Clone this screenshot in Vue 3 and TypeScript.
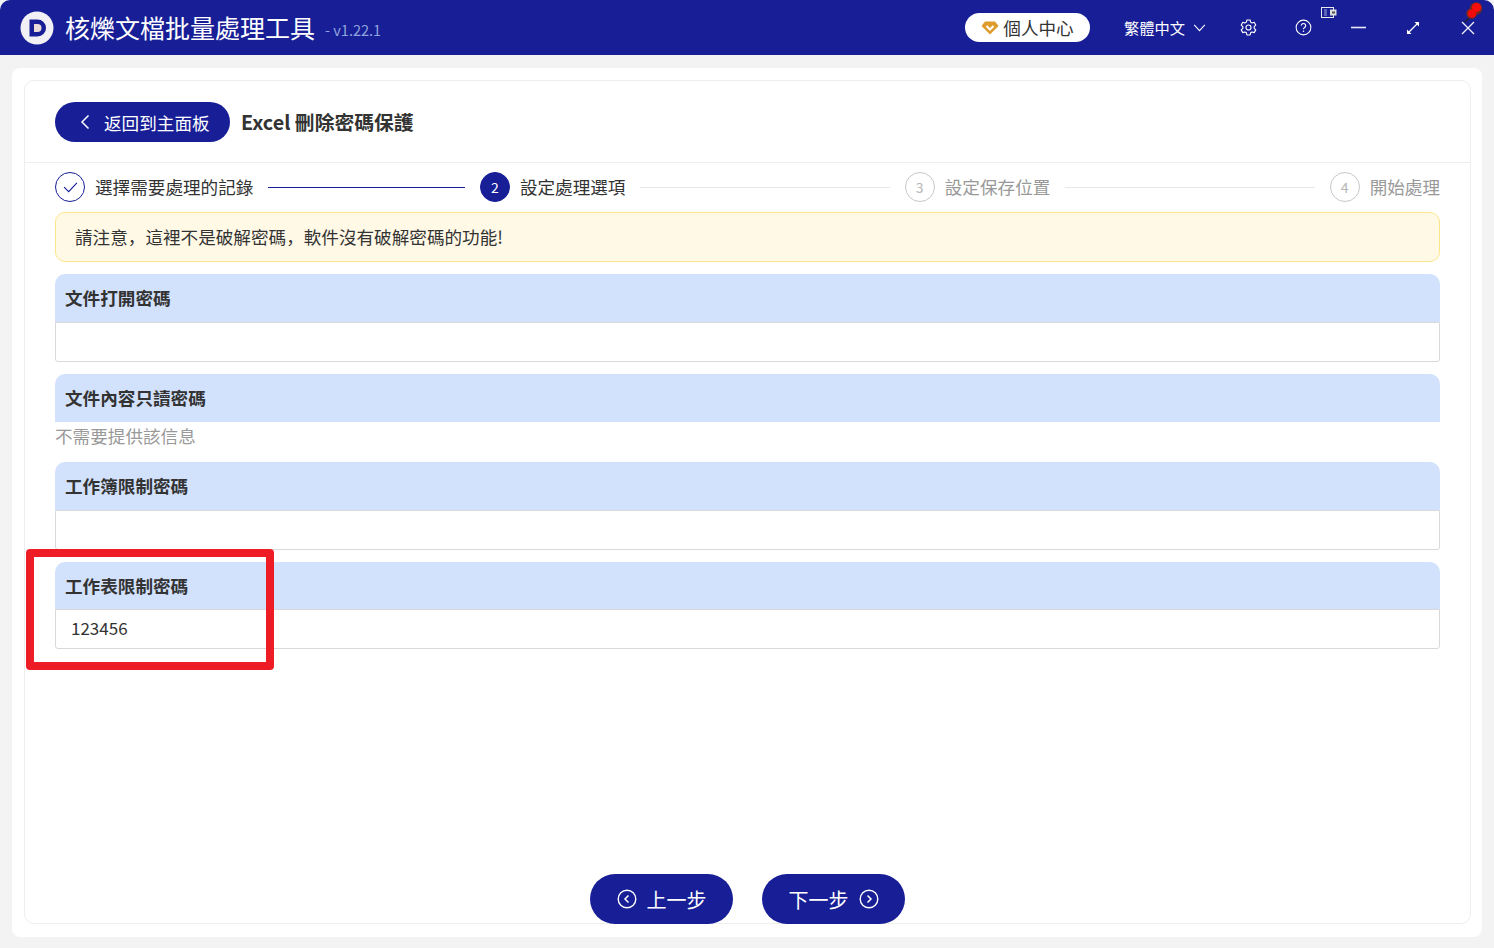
<script setup lang="ts">
interface Step {
  no: number
  label: string
  state: 'done' | 'active' | 'todo'
}

const steps: Step[] = [
  { no: 1, label: '選擇需要處理的記錄', state: 'done' },
  { no: 2, label: '設定處理選項', state: 'active' },
  { no: 3, label: '設定保存位置', state: 'todo' },
  { no: 4, label: '開始處理', state: 'todo' },
]
</script>

<template>
  <div class="app">
    <header class="topbar">
      <svg class="logo" viewBox="0 0 34 34" width="34" height="34">
        <circle cx="17" cy="17" r="16.5" fill="#f1f0f4" />
        <path d="M9.5 8.5h8a8.5 8.5 0 0 1 0 17h-8z" fill="#171e96" />
        <path d="M14 13h3.5a4 4 0 0 1 0 8H14z" fill="#e9dcd8" />
      </svg>
      <span class="app-name">核爍文檔批量處理工具</span>
      <span class="version">- v1.22.1</span>
      <div class="spacer"></div>
      <button class="user-btn">
        <svg viewBox="0 0 18 14" width="18" height="14">
          <path d="M4 .5h10l3.500 4.500L9 13.500.5 5z" fill="#dd9c2c" />
          <path d="M5.500 5l3.500 3.500L12.500 5" fill="none" stroke="#fff" stroke-width="2" />
        </svg>
        個人中心
      </button>
      <span class="lang">繁體中文</span>
      <svg class="lang-arrow" viewBox="0 0 14 9" width="13" height="8">
        <path d="M1 1l6 6.500L13 1" fill="none" stroke="#fff" stroke-width="1.200" />
      </svg>
      <svg class="gear" viewBox="0 0 18 18" width="17" height="17">
        <path
          d="M7.300 1h3.400l.5 2.300 1.500.9 2.300-.7 1.700 2.900-1.700 1.600v1.900l1.700 1.600-1.700 2.900-2.300-.7-1.500.9-.5 2.300H7.300l-.5-2.300-1.500-.9-2.300.7-1.700-2.900L3 10V8L1.300 6.400 3 3.500l2.300.7 1.500-.9z"
          fill="none"
          stroke="#fff"
          stroke-width="1.200"
          stroke-linejoin="round"
        />
        <circle cx="9" cy="9" r="2.700" fill="none" stroke="#fff" stroke-width="1.200" />
      </svg>
      <svg class="help" viewBox="0 0 18 18" width="17" height="17">
        <circle cx="9" cy="9" r="7.800" fill="none" stroke="#fff" stroke-width="1.100" />
        <path d="M6.700 7a2.300 2.300 0 1 1 3.500 2c-.8.500-1.200.9-1.200 1.800" fill="none" stroke="#fff" stroke-width="1.200" />
        <circle cx="9" cy="13" r=".8" fill="#fff" />
      </svg>
      <svg class="win-btn min" viewBox="0 0 15 3" width="15" height="3">
        <path d="M0 1.500h15" stroke="#e8e8f6" stroke-width="1.600" />
      </svg>
      <svg class="win-btn max" viewBox="0 0 14 14" width="14" height="14">
        <path d="M2 12l10-10" stroke="#fff" stroke-width="1.200" />
        <path d="M8.500 1H13v4.500zM1 8.500V13h4.500z" fill="#fff" />
      </svg>
      <svg class="win-btn close" viewBox="0 0 14 14" width="14" height="14">
        <path d="M1 1l12 12M13 1L1 13" stroke="#f2f2fb" stroke-width="1.300" />
      </svg>
      <svg class="mini-icon" viewBox="0 0 16 12" width="16" height="12">
        <rect x=".5" y=".5" width="12" height="10" fill="#171e96" stroke="#e8e8e8" />
        <rect x="3" y="2" width="3" height="7" fill="#5a62b8" />
        <rect x="9" y="2.500" width="6.500" height="6" fill="#ddd" />
        <rect x="11" y="4.500" width="3" height="2" fill="#555" />
      </svg>
      <svg class="pin" viewBox="0 0 20 21" width="20" height="21">
        <path d="M1 20l6-6" stroke="#222" stroke-width="1.500" />
        <circle cx="12" cy="6.500" r="6.300" fill="#6e2a22" />
        <circle cx="7.500" cy="11.500" r="5.300" fill="#6e2a22" />
        <circle cx="12.500" cy="5.500" r="4.600" fill="#f60d0d" />
        <circle cx="8" cy="11.500" r="4.300" fill="#f00c0c" />
      </svg>
    </header>

    <main class="outer">
      <section class="card">
        <div class="card-head">
          <button class="back-btn">
            <svg viewBox="0 0 10 16" width="10" height="16">
              <path d="M8.500 1.500L2 8l6.500 6.500" fill="none" stroke="#fff" stroke-width="1.500" />
            </svg>
            <span>返回到主面板</span>
          </button>
          <h1 class="page-title">Excel 刪除密碼保護</h1>
        </div>

        <div class="card-body">
          <div class="steps">
            <div v-for="(step, i) in steps" :key="step.no" class="step" :class="step.state">
              <span class="step-dot">
                <svg v-if="step.state === 'done'" viewBox="0 0 16 12" width="15" height="11">
                  <path d="M1 5.500L6 10.500 15 1" fill="none" stroke="#171e96" stroke-width="1.200" />
                </svg>
                <template v-else>{{ step.no }}</template>
              </span>
              <span class="step-label">{{ step.label }}</span>
              <div v-if="i < steps.length - 1" class="step-line"></div>
            </div>
          </div>

          <div class="notice">請注意，這裡不是破解密碼，軟件沒有破解密碼的功能!</div>

          <div class="field">
            <div class="field-title">文件打開密碼</div>
            <div class="field-input"></div>
          </div>

          <div class="field">
            <div class="field-title">文件內容只讀密碼</div>
            <div class="field-hint">不需要提供該信息</div>
          </div>

          <div class="field">
            <div class="field-title">工作簿限制密碼</div>
            <div class="field-input"></div>
          </div>

          <div class="field last">
            <div class="field-title">工作表限制密碼</div>
            <div class="field-input">123456</div>
          </div>
        </div>

        <div class="card-foot">
          <button class="nav-btn">
            <svg viewBox="0 0 20 20" width="20" height="20">
              <circle cx="10" cy="10" r="8.800" fill="none" stroke="#fff" stroke-width="1.400" />
              <path d="M11.500 6.500L8 10l3.500 3.500" fill="none" stroke="#fff" stroke-width="1.500" />
            </svg>
            上一步
          </button>
          <button class="nav-btn">
            下一步
            <svg viewBox="0 0 20 20" width="20" height="20">
              <circle cx="10" cy="10" r="8.800" fill="none" stroke="#fff" stroke-width="1.400" />
              <path d="M8.500 6.500L12 10l-3.500 3.500" fill="none" stroke="#fff" stroke-width="1.500" />
            </svg>
          </button>
        </div>
      </section>
    </main>

    <div class="highlight"></div>
  </div>
</template>

<style>
html,
body {
  margin: 0;
  background: #f3f3f3;
}
</style>

<style scoped>
.app {
  position: relative;
  width: 1494px;
  height: 948px;
  overflow: hidden;
  display: flex;
  flex-direction: column;
  background: #f3f3f3;
  color: #333;
  font-family: 'Noto Sans CJK SC', 'Noto Sans', sans-serif;
}

button {
  font-family: inherit;
  border: none;
  cursor: pointer;
}

.topbar {
  position: relative;
  flex: none;
  height: 55px;
  display: flex;
  align-items: center;
  padding: 0 19px 0 20px;
  box-sizing: border-box;
  background: #171e96;
  border-radius: 10px 10px 0 0;
  color: #fff;
}

.logo {
  flex: none;
}

.app-name {
  margin-left: 11px;
  font-size: 25px;
  line-height: 55px;
  white-space: nowrap;
}

.version {
  margin: 4px 0 0 10px;
  font-size: 14.5px;
  color: #8fa5dc;
}

.spacer {
  flex: 1;
}

.user-btn {
  width: 125px;
  height: 29px;
  margin-right: 34px;
  display: flex;
  align-items: center;
  justify-content: center;
  gap: 4px;
  padding: 0;
  border-radius: 15px;
  background: #fff;
  color: #333;
  font-size: 17.6px;
}

.lang {
  padding-bottom: 2px;
  font-size: 15.25px;
  white-space: nowrap;
}

.lang-arrow {
  margin-left: 8px;
}

.gear {
  margin-left: 34px;
}

.help {
  margin-left: 38px;
}

.win-btn.min {
  margin-left: 39px;
}

.win-btn.max {
  margin-left: 40px;
}

.win-btn.close {
  margin-left: 41px;
  margin-top: 1px;
}

.mini-icon {
  position: absolute;
  left: 1321px;
  top: 7px;
}

.pin {
  position: absolute;
  left: 1464px;
  top: 2px;
}

.outer {
  flex: none;
  height: 869px;
  margin: 13px 12px 0;
  padding: 12px 11px 12px 12px;
  box-sizing: border-box;
  background: #fff;
  border-radius: 8px;
}

.card {
  height: 844px;
  box-sizing: border-box;
  display: flex;
  flex-direction: column;
  border: 1px solid #eee;
  border-radius: 10px;
}

.card-head {
  flex: none;
  height: 82px;
  display: flex;
  align-items: center;
  gap: 11px;
  padding: 0 30px;
  box-sizing: border-box;
  border-bottom: 1px solid #eee;
}

.back-btn {
  width: 175px;
  height: 40px;
  display: flex;
  align-items: center;
  gap: 14px;
  padding: 0 0 0 25px;
  border-radius: 20px;
  background: #171e96;
  color: #fff;
  font-size: 17.6px;
  white-space: nowrap;
}

.back-btn span {
  padding-top: 2px;
}

.page-title {
  margin: 0;
  font-size: 19.8px;
  font-weight: 700;
  color: #333;
}

.card-body {
  flex: 1;
  display: flex;
  flex-direction: column;
  padding: 9px 30px 0;
}

.steps {
  display: flex;
  align-items: center;
  height: 30px;
}

.step {
  flex: 1;
  display: flex;
  align-items: center;
  gap: 10px;
  font-size: 17.6px;
  white-space: nowrap;
}

.step:last-child {
  flex: none;
}

.step-dot {
  flex: none;
  width: 30px;
  height: 30px;
  box-sizing: border-box;
  display: flex;
  align-items: center;
  justify-content: center;
  border: 1px solid #c8c8c8;
  border-radius: 50%;
  font-size: 14px;
  color: #b5b5b5;
}

.step.done .step-dot {
  border-color: #171e96;
}

.step.active .step-dot {
  border-color: #171e96;
  background: #171e96;
  color: #fff;
}

.step-label {
  padding-bottom: 2px;
}

.step.todo .step-label {
  color: #999;
}

.step-line {
  flex: 1;
  height: 1px;
  margin: 0 15px 0 5px;
  background: #e8e8e8;
}

.step.done .step-line {
  background: #171e96;
}

.notice {
  height: 50px;
  margin-top: 10px;
  padding: 0 0 2px 19px;
  box-sizing: border-box;
  display: flex;
  align-items: center;
  border: 1px solid #fde68a;
  border-radius: 10px;
  background: #fff9e6;
  font-size: 17.6px;
}

.field {
  margin-top: 12px;
}

.field-title {
  height: 48px;
  padding: 0 0 2px 10px;
  box-sizing: border-box;
  display: flex;
  align-items: center;
  border-radius: 10px 10px 0 0;
  background: #d2e2fc;
  font-size: 17.6px;
  font-weight: 700;
  color: #333;
}

.field.last .field-title {
  height: 47px;
  padding-bottom: 1px;
}

.field-input {
  height: 40px;
  padding: 0 0 3px 15px;
  box-sizing: border-box;
  display: flex;
  align-items: center;
  border: 1px solid #d9d9d9;
  border-radius: 0 0 3px 3px;
  font-size: 17px;
}

.field-hint {
  height: 28px;
  line-height: 28px;
  font-size: 17.6px;
  color: #999;
}

.card-foot {
  flex: none;
  display: flex;
  justify-content: center;
  gap: 29px;
  margin-bottom: -1px;
}

.nav-btn {
  width: 143px;
  height: 50px;
  display: flex;
  align-items: center;
  justify-content: center;
  gap: 10px;
  padding: 0;
  border-radius: 25px;
  background: #171e96;
  color: #fff;
  font-size: 20px;
}

.highlight {
  position: absolute;
  left: 26px;
  top: 549px;
  width: 248px;
  height: 121px;
  box-sizing: border-box;
  border: 8px solid #ee1c25;
  border-radius: 4px;
}
</style>
